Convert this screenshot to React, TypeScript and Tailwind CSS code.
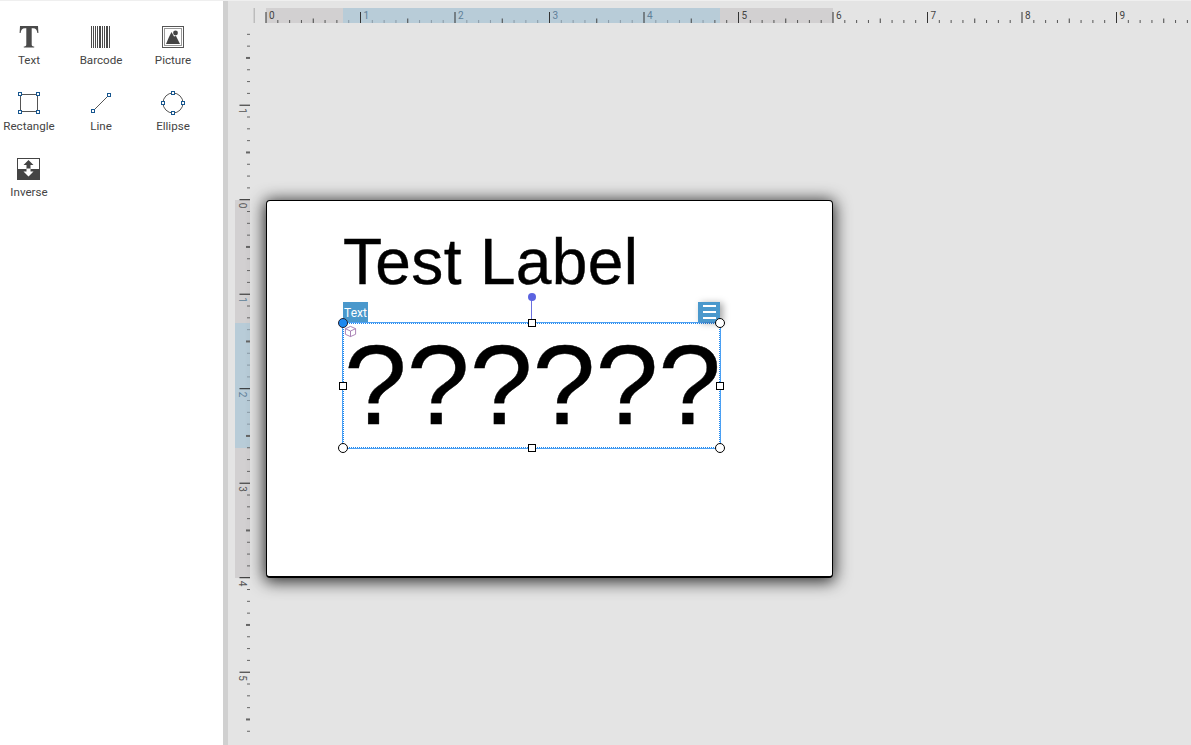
import React from "react";

const FONT = "[font-family:Roboto,'Noto_Sans',sans-serif]";

const TextIcon = () => (
  <svg width="24" height="24" viewBox="0 0 24 24">
    <path d="M3 1 H21 L21.4 8 H20.4 C20 5 19 3.2 16 3.2 H14.7 V19.5 C14.7 21 15.6 21.4 17.2 21.6 V22.6 H6.8 V21.6 C8.4 21.4 9.3 21 9.3 19.5 V3.2 H8 C5 3.2 4 5 3.6 8 H2.6 Z" fill="#4a4a4a" />
  </svg>
);

const BarcodeIcon = () => {
  const bars: [number, number][] = [
    [2, 1], [4, 1], [6, 1], [8, 1], [10, 2], [13, 1], [15, 1], [17, 2], [20, 1],
  ];
  return (
    <svg width="24" height="24" viewBox="0 0 24 24">
      {bars.map(([x, w]) => (
        <rect key={x} x={x} y="1" width={w} height="22" fill="#4a4a4a" />
      ))}
    </svg>
  );
};

const PictureIcon = () => (
  <svg width="24" height="24" viewBox="0 0 24 24">
    <rect x="1.5" y="1.5" width="21" height="21" fill="#fff" stroke="#555" />
    <rect x="3.5" y="3.5" width="17" height="17" fill="#fff" stroke="#999" />
    <circle cx="14.5" cy="8" r="2.4" fill="#444" />
    <path d="M5 19 L8 12 L10.5 7 L13 11.5 L15 11 L19 19 Z" fill="#444" />
  </svg>
);

const H = ({ x, y }: { x: number; y: number }) => (
  <rect x={x - 1.5} y={y - 1.5} width="3" height="3" fill="#fff" stroke="#17568f" strokeWidth="1" />
);

const RectIcon = () => (
  <svg width="26" height="26" viewBox="0 0 26 26">
    <rect x="4.5" y="4.5" width="17" height="17" fill="none" stroke="#555" />
    <H x={4} y={4} />
    <H x={22} y={4} />
    <H x={4} y={22} />
    <H x={22} y={22} />
  </svg>
);

const LineIcon = () => (
  <svg width="26" height="26" viewBox="0 0 26 26">
    <line x1="5" y1="21" x2="21" y2="5" stroke="#555" />
    <H x={5} y={21} />
    <H x={21} y={5} />
  </svg>
);

const EllipseIcon = () => (
  <svg width="26" height="26" viewBox="0 0 26 26">
    <circle cx="13" cy="13" r="10" fill="none" stroke="#555" />
    <H x={13} y={3} />
    <H x={3} y={13} />
    <H x={23} y={13} />
    <H x={13} y={23} />
  </svg>
);

const InverseIcon = () => (
  <svg width="26" height="26" viewBox="0 0 26 26">
    <rect x="1.5" y="2.5" width="22" height="21" fill="#fff" stroke="#444" />
    <rect x="1" y="13" width="23" height="11" fill="#444" />
    <path d="M12.5 4 L17.5 9 H14.5 V13 H10.5 V9 H7.5 Z" fill="#444" />
    <path d="M12.5 20.5 L7.5 15.5 H10.5 V12.5 H14.5 V15.5 H17.5 Z" fill="#fff" />
  </svg>
);

const TOOLS: [string, React.ReactNode][] = [
  ["Text", <TextIcon key="t" />],
  ["Barcode", <BarcodeIcon key="b" />],
  ["Picture", <PictureIcon key="p" />],
  ["Rectangle", <RectIcon key="r" />],
  ["Line", <LineIcon key="l" />],
  ["Ellipse", <EllipseIcon key="e" />],
  ["Inverse", <InverseIcon key="i" />],
];

const Sidebar = () => (
  <aside className="w-[223px] shrink-0 bg-white">
    <div className="-ml-[7px] pt-[23px] grid grid-cols-[72px_72px_72px] auto-rows-[66px]">
      {TOOLS.map(([name, icon]) => (
        <div key={name} className="flex flex-col items-center">
          <div className="h-[26px] flex items-center justify-center">{icon}</div>
          <span className={`${FONT} mt-[2px] text-[11.6px] leading-[16px] text-[#444]`}>{name}</span>
        </div>
      ))}
    </div>
  </aside>
);

const PPI = 94.5;
const STEP = PPI / 8;

const TopRuler = () => {
  const x0 = 266 - 228;
  const ticks: React.ReactNode[] = [];
  for (let i = -1; i < 80; i++) {
    const x = x0 + i * STEP;
    const major = i % 8 === 0;
    const half = i % 8 === 4;
    if (major) {
      ticks.push(<rect key={i} x={x - 0.5} y={4} width={1} height={11} fill="#333" />);
      ticks.push(
        <text key={`t${i}`} x={x + 3} y={10.5} fontSize="10" fill={i >= 8 && i <= 32 ? "#5f7f98" : "#444"} fontFamily="Roboto, sans-serif">
          {i / 8}
        </text>
      );
    } else if (half) {
      ticks.push(<rect key={i} x={x - 0.5} y={10.5} width={1} height={4.5} fill="#444" />);
    } else if (i === -1) {
      ticks.push(<rect key={i} x={x - 0.5} y={0} width={1} height={15} fill="#aaa" />);
    } else {
      ticks.push(<rect key={i} x={x - 0.5} y={12} width={1} height={3} fill={i > 6 && i < 38 ? "#8a9aa6" : "#555"} />);
    }
  }
  return (
    <svg width="963" height="15" className="block mt-[7px]">
      <rect x="38" y="0" width="567" height="15" fill="#d2d0d1" />
      <rect x="115" y="0" width="377" height="15" fill="#b8ccd8" />
      {ticks}
    </svg>
  );
};

const LeftRuler = () => {
  const y0 = 199.7 - 23;
  const ticks: React.ReactNode[] = [];
  for (let i = -14; i < 46; i++) {
    const y = y0 + i * STEP;
    const major = i % 8 === 0;
    const half = Math.abs(i % 8) === 4;
    if (major) {
      ticks.push(<rect key={i} x={4.5} y={y - 0.5} width={10.5} height={1} fill="#222" />);
      ticks.push(
        <text
          key={`t${i}`}
          transform={`translate(3.5 ${y + 3}) rotate(90)`}
          fontSize="10"
          fill={i >= 8 && i <= 16 ? "#5f7f98" : "#555"}
          fontFamily="Roboto, sans-serif"
        >
          {Math.abs(i / 8)}
        </text>
      );
    } else if (half) {
      ticks.push(<rect key={i} x={11} y={y - 1} width={4} height={2} fill="#666" />);
    } else {
      ticks.push(<rect key={i} x={12} y={y - 0.5} width={3} height={1} fill={i > 10 && i < 20 ? "#8a9aa6" : "#666"} />);
    }
  }
  return (
    <svg width="15" height="722" className="block shrink-0 ml-[7px]">
      <rect x="0" y="177" width="15" height="378" fill="#d2d0d1" />
      <rect x="0" y="300" width="15" height="125" fill="#b8ccd8" />
      {ticks}
    </svg>
  );
};

const SquareHandle = ({ className }: { className: string }) => (
  <div className={`absolute w-[8px] h-[8px] bg-white border border-black ${className}`} />
);
const RoundHandle = ({ className }: { className: string }) => (
  <div className={`absolute w-[10px] h-[10px] rounded-full bg-white border border-black ${className}`} />
);

const CubeIcon = () => (
  <svg width="13" height="13" viewBox="0 0 14 14" className="absolute left-0 top-px">
    <path d="M7 1.5 L12.5 4 V10 L7 12.5 L1.5 10 V4 Z M1.5 4 L7 6.5 L12.5 4 M7 6.5 V12.5" fill="none" stroke="#9a6ca8" strokeWidth="0.9" />
  </svg>
);

const Selection = () => (
  <div className="relative w-[377px] h-[125px] border border-dotted border-[#1e88f0] outline outline-[1px] outline-[#1e88f0]/80">
    <div className={`absolute -left-px bottom-full mb-[2px] w-[25px] h-[20px] bg-[#4a98cc] text-white text-[12px] leading-[22px] text-center ${FONT}`}>
      Text
    </div>
    <div className="absolute -right-px bottom-full mb-[2px] w-[22px] h-[20px] bg-[#4a98cc] shadow-[3px_1px_7px_rgba(0,0,0,0.35)] flex flex-col items-center justify-center gap-[4px]">
      <span className="block w-[13px] h-[2px] bg-white" />
      <span className="block w-[13px] h-[2px] bg-white" />
      <span className="block w-[13px] h-[2px] bg-white" />
    </div>
    <div className="absolute left-[187px] -top-[24px] w-px h-[24px] bg-[#6a70e0]" />
    <div className="absolute left-[184px] -top-[31px] w-[8px] h-[8px] rounded-full bg-[#5b63e0]" />
    <CubeIcon />
    <div className="[font-family:'Liberation_Sans',Arial,sans-serif] [-webkit-text-stroke:0.4px_#000] text-[113px] leading-[126px] text-black whitespace-nowrap -mt-[2px]">
      ??????
    </div>
    <div className="absolute -left-[6px] -top-[6px] w-[10px] h-[10px] rounded-full bg-[#1e88f0] border border-[#223]" />
    <RoundHandle className="-right-[6px] -top-[6px]" />
    <RoundHandle className="-left-[6px] -bottom-[6px]" />
    <RoundHandle className="-right-[6px] -bottom-[6px]" />
    <SquareHandle className="left-[184px] -top-[5px]" />
    <SquareHandle className="left-[184px] -bottom-[5px]" />
    <SquareHandle className="-left-[5px] top-[58px]" />
    <SquareHandle className="-right-[5px] top-[58px]" />
  </div>
);

const Label = () => (
  <div className="ml-[16px] mt-[177px] w-[567px] h-[378px] shrink-0 box-border bg-white border border-black border-b-2 border-r-[1.5px] rounded-[4px] shadow-[0_2px_16px_2px_rgba(0,0,0,0.8)] pl-[76px] pt-[24px]">
    <div className="[font-family:'Liberation_Sans',Arial,sans-serif] [-webkit-text-stroke:0.4px_#000] text-[64px] tracking-[0.35px] leading-[74px] text-black whitespace-nowrap">
      Test Label
    </div>
    <div className="mt-[24px]">
      <Selection />
    </div>
  </div>
);

export default function App() {
  return (
    <div className="flex w-[1191px] h-[745px] overflow-hidden border-t border-[#efefef] bg-white">
      <Sidebar />
      <div className="w-[5px] shrink-0 bg-[#d0d0d0]" />
      <main className="flex-1 min-w-0 bg-[#e4e4e4] overflow-hidden">
        <TopRuler />
        <div className="flex items-start">
          <LeftRuler />
          <Label />
        </div>
      </main>
    </div>
  );
}
